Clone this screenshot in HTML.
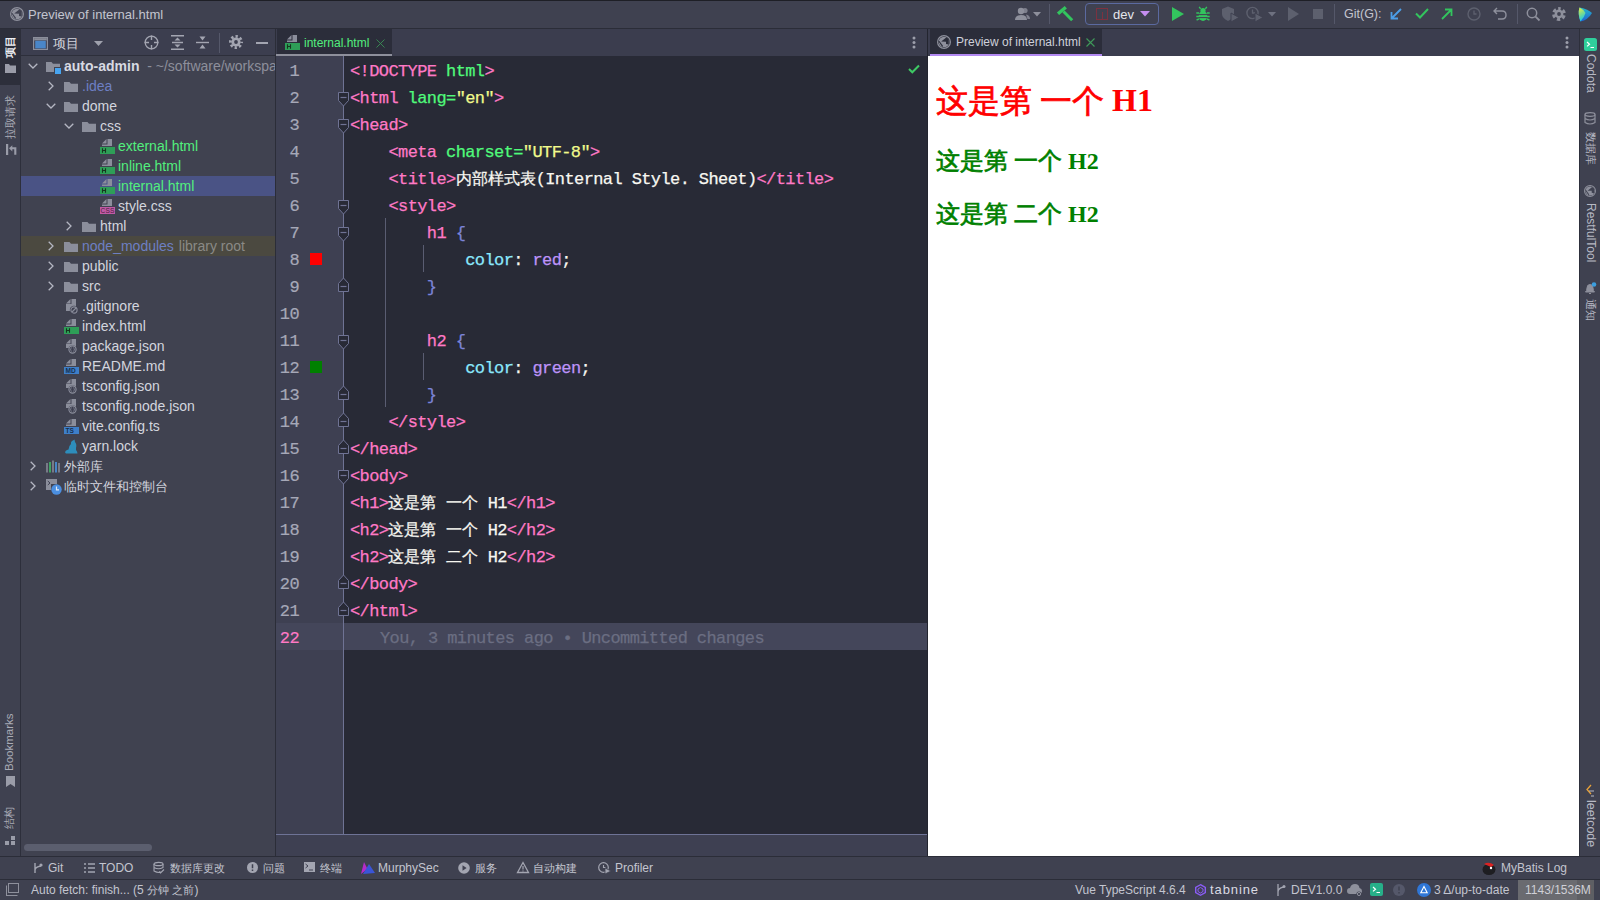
<!DOCTYPE html>
<html><head><meta charset="utf-8">
<style>
*{margin:0;padding:0;box-sizing:border-box}
html,body{width:1600px;height:900px;overflow:hidden;background:#3f4150;font-family:"Liberation Sans",sans-serif;}
.abs{position:absolute}
svg{position:absolute;overflow:visible}
#title{left:0;top:0;width:1600px;height:28px;background:#3f4150}
#title .t{left:28px;top:7px;font-size:13px;color:#c3c5cf;white-space:nowrap}
#lstrip{left:0;top:28px;width:21px;height:828px;background:#3f4150;border-right:1px solid #2d2f3b}
.vt{position:absolute;transform-origin:0 0;transform:rotate(90deg);font-size:12px;color:#a9abb6;white-space:nowrap;line-height:12px}
#proj{left:21px;top:28px;width:254px;height:828px;background:#404250;overflow:hidden}
#projhdr{left:0;top:0;width:254px;height:28px;background:#3c3e4f;border-bottom:1px solid #2d2f3b;border-top:1px solid #34364a}
.row{position:absolute;left:0;width:254px;height:20px;font-size:14px;line-height:20px;color:#d3d5de;white-space:nowrap}
.row .tx{position:absolute;top:0}
.gr{color:#52ef7d}.k{font-size:16px;letter-spacing:0}.hh{font-family:"Liberation Serif",serif;font-weight:bold;white-space:nowrap}.hz{font-weight:normal;-webkit-text-stroke:0.7px currentColor}
#vsep{left:275px;top:28px;width:1px;height:828px;background:#2b2d38}
#ed{left:276px;top:28px;width:651px;height:828px;background:#282a36;overflow:hidden}
#edtabs{left:0;top:0;width:651px;height:28px;background:#3b3d4e}
#gutter{left:0;top:28px;width:67px;height:778px;background:#3e4052}
#code{left:67px;top:28px;width:584px;height:778px;background:#282a36}
#edbot{left:0;top:806px;width:651px;height:22px;background:#3e4052;border-top:1px solid #6e7396}
.ln{position:absolute;left:0;width:23px;margin-top:1.5px;-webkit-text-stroke:0.2px currentColor;text-align:right;font-family:"Liberation Mono",monospace;font-size:17px;letter-spacing:-0.6px;color:#a6a8b8;height:27px;line-height:27px}
.cl{position:absolute;left:74px;margin-top:1.5px;-webkit-text-stroke:0.25px currentColor;font-family:"Liberation Mono",monospace;font-size:17px;letter-spacing:-0.6px;height:27px;line-height:27px;color:#f8f8f2;white-space:pre}
.p{color:#ff79c6}.g{color:#50fa7b}.y{color:#f1fa8c}.c{color:#8be9fd}.v{color:#bd93f9}.b{color:#7c84d8}.w{color:#f8f8f2}
#psep{left:927px;top:28px;width:1px;height:828px;background:#23252f}
#prev{left:928px;top:28px;width:651px;height:828px;background:#fff;overflow:hidden}
#prevtabs{left:0;top:0;width:651px;height:28px;background:#3b3d4e}
#rstrip{left:1579px;top:28px;width:21px;height:828px;background:#3f4150;border-left:1px solid #2d2f3b}
#tools{left:0;top:856px;width:1600px;height:24px;background:#3f4150;border-top:1px solid #2b2d38;border-bottom:1px solid #2b2d38}
#status{left:0;top:880px;width:1600px;height:20px;background:#3f4150}
.tt{position:absolute;top:4px;font-size:12px;color:#c3c5cf;white-space:nowrap}
</style></head>
<body>
<svg width="0" height="0" style="position:absolute">
<defs>
<symbol id="folder" viewBox="0 0 14 12"><path d="M0 0H5.5L7 2H14V12H0Z" fill="#8b8e9b"/></symbol>
<symbol id="chevR" viewBox="0 0 8 10"><path d="M2 1L6 5L2 9" fill="none" stroke="#b8bac4" stroke-width="1.3"/></symbol>
<symbol id="chevD" viewBox="0 0 10 8"><path d="M1 2L5 6L9 2" fill="none" stroke="#b8bac4" stroke-width="1.3"/></symbol>
<symbol id="doc" viewBox="0 0 15 15"><path d="M2 0H12V7H2Z" fill="#8b8e9b"/><path d="M2 0H7V1L3 5H2Z" fill="#3f4152"/><path d="M2.5 4.2L6.2 0.5" stroke="#3f4152" stroke-width="1.4"/></symbol>
</defs>
</svg>
<div id="title" class="abs"><div class="abs t">Preview of internal.html</div></div>
<div id="lstrip" class="abs">
<div class="abs" style="left:0;top:0;width:20px;height:57px;background:#2d2f3b"></div>
<div class="vt" style="left:4px;top:30px;color:#eceef2;font-size:11px;font-weight:bold;transform:rotate(-90deg)">项目</div>
<svg style="left:5px;top:36px" width="11" height="9" viewBox="0 0 11 9"><path d="M0 0H4L5 1.5H11V9H0Z" fill="#9a9ca8"/></svg>
<div class="vt" style="left:4px;top:111px;font-size:11px;transform:rotate(-90deg)">拉取请求</div>
<svg style="left:5px;top:115px" width="12" height="13" viewBox="0 0 12 13"><rect x="1" y="1" width="2.2" height="11" fill="#9a9ca8"/><path d="M4 5.3L7.3 2.2V8.4Z" fill="#9a9ca8"/><path d="M7 5.3H10.3V11.8" fill="none" stroke="#9a9ca8" stroke-width="2.1"/></svg>
<div class="vt" style="left:3px;top:743px;font-size:11.5px;transform:rotate(-90deg)">Bookmarks</div>
<svg style="left:6px;top:748px" width="9" height="11" viewBox="0 0 9 11"><path d="M0 0H9V11L4.5 8L0 11Z" fill="#9a9ca8"/></svg>
<div class="vt" style="left:3px;top:801px;font-size:11px;transform:rotate(-90deg)">结构</div>
<svg style="left:5px;top:808px" width="10" height="10" viewBox="0 0 10 10"><path d="M0 5H4V9H0ZM6 5H10V9H6ZM6 0H10V4H6Z" fill="#9a9ca8"/></svg>
</div>
<div id="proj" class="abs">
<div id="projhdr" class="abs">
<svg style="left:12px;top:8px" width="15" height="13" viewBox="0 0 15 13"><rect x="0.6" y="0.6" width="13.8" height="11.8" fill="none" stroke="#8b8e9b" stroke-width="1.2"/><rect x="1.2" y="1.2" width="12.6" height="2.2" fill="#8b8e9b"/><rect x="2.2" y="3.8" width="10.6" height="7.6" fill="#4a86c8"/></svg>
<div class="abs" style="left:32px;top:6px;font-size:13px;color:#d3d5de">项目</div>
<svg style="left:73px;top:12px" width="9" height="6" viewBox="0 0 9 6"><path d="M0 0H9L4.5 5Z" fill="#9fa1ad"/></svg>
<svg style="left:123px;top:6px" width="15" height="15" viewBox="0 0 15 15"><circle cx="7.5" cy="7.5" r="6.3" fill="none" stroke="#a3a5b1" stroke-width="1.3"/><path d="M7.5 0.5V5M7.5 10V14.5M0.5 7.5H5M10 7.5H14.5" stroke="#a3a5b1" stroke-width="1.4"/></svg>
<svg style="left:150px;top:6px" width="13" height="15" viewBox="0 0 13 15"><path d="M0 0.8H13M0 14.2H13M1 7.5H12" stroke="#a3a5b1" stroke-width="1.4"/><path d="M6.5 2.5L3.5 5.5H9.5ZM6.5 12.5L3.5 9.5H9.5Z" fill="#a3a5b1"/></svg>
<svg style="left:175px;top:6px" width="13" height="15" viewBox="0 0 13 15"><path d="M0 7.5H13" stroke="#a3a5b1" stroke-width="1.4"/><path d="M6.5 5.5L3.5 1.5H9.5ZM6.5 9.5L3.5 13.5H9.5Z" fill="#a3a5b1"/></svg>
<div class="abs" style="left:198px;top:4px;width:1px;height:20px;background:#55586a"></div>
<svg style="left:208px;top:6px" width="14" height="14" viewBox="0 0 14 14"><circle cx="7" cy="7" r="5.6" fill="none" stroke="#a3a5b1" stroke-width="2.8" stroke-dasharray="2.3 2.098" stroke-dashoffset="1.15"/><circle cx="7" cy="7" r="4.6" fill="#a3a5b1"/><circle cx="7" cy="7" r="1.9" fill="#3c3e4f"/></svg>
<div class="abs" style="left:235px;top:13px;width:12px;height:1.6px;background:#a3a5b1"></div>
</div>
<div class="row" style="top:28px;"><svg style="left:7px;top:7px" width="10" height="6" viewBox="0 0 10 6"><path d="M0.7 0.7L5 5L9.3 0.7" fill="none" stroke="#b4b6c2" stroke-width="1.3"/></svg><svg style="left:25px;top:5.5px" width="14" height="10" viewBox="0 0 14 10"><path d="M0 0H5.5L7 1.8H14V10H0Z" fill="#8b8e9b"/></svg><svg style="left:33px;top:11px" width="7" height="7" viewBox="0 0 7 7"><rect x="0" y="0" width="7" height="7" fill="#404250"/><rect x="1" y="1" width="6" height="6" fill="#47a4f0"/></svg><div class="tx" style="left:43px"><b style="color:#d8dae2">auto-admin</b><span style="color:#8d8f9b">&nbsp;&nbsp;- ~/software/workspace/auto-admin</span></div></div>
<div class="row" style="top:48px;"><svg style="left:27px;top:5px" width="6" height="10" viewBox="0 0 6 10"><path d="M0.7 0.7L5 5L0.7 9.3" fill="none" stroke="#b4b6c2" stroke-width="1.3"/></svg><svg style="left:43px;top:5.5px" width="14" height="10" viewBox="0 0 14 10"><path d="M0 0H5.5L7 1.8H14V10H0Z" fill="#8b8e9b"/></svg><div class="tx" style="left:61px"><span style="color:#6d7fc3">.idea</span></div></div>
<div class="row" style="top:68px;"><svg style="left:25px;top:7px" width="10" height="6" viewBox="0 0 10 6"><path d="M0.7 0.7L5 5L9.3 0.7" fill="none" stroke="#b4b6c2" stroke-width="1.3"/></svg><svg style="left:43px;top:5.5px" width="14" height="10" viewBox="0 0 14 10"><path d="M0 0H5.5L7 1.8H14V10H0Z" fill="#8b8e9b"/></svg><div class="tx" style="left:61px">dome</div></div>
<div class="row" style="top:88px;"><svg style="left:43px;top:7px" width="10" height="6" viewBox="0 0 10 6"><path d="M0.7 0.7L5 5L9.3 0.7" fill="none" stroke="#b4b6c2" stroke-width="1.3"/></svg><svg style="left:61px;top:5.5px" width="14" height="10" viewBox="0 0 14 10"><path d="M0 0H5.5L7 1.8H14V10H0Z" fill="#8b8e9b"/></svg><div class="tx" style="left:79px">css</div></div>
<div class="row" style="top:108px;"><svg style="left:79px;top:3px" width="15" height="15" viewBox="0 0 15 15"><path d="M7.5 0H12V7H2V5.5H7.5Z" fill="#8b8e9b"/><path d="M2 4.5L6.5 0V4.5Z" fill="#8b8e9b"/><rect x="0" y="8" width="15" height="7" fill="#2e9e57"/><path d="M2.5 9.2V13.8M5.5 9.2V13.8M2.5 11.5H5.5" stroke="#17351f" stroke-width="1.1"/></svg><div class="tx" style="left:97px"><span class="gr">external.html</span></div></div>
<div class="row" style="top:128px;"><svg style="left:79px;top:3px" width="15" height="15" viewBox="0 0 15 15"><path d="M7.5 0H12V7H2V5.5H7.5Z" fill="#8b8e9b"/><path d="M2 4.5L6.5 0V4.5Z" fill="#8b8e9b"/><rect x="0" y="8" width="15" height="7" fill="#2e9e57"/><path d="M2.5 9.2V13.8M5.5 9.2V13.8M2.5 11.5H5.5" stroke="#17351f" stroke-width="1.1"/></svg><div class="tx" style="left:97px"><span class="gr">inline.html</span></div></div>
<div class="row" style="top:148px;background:#4a5385"><svg style="left:79px;top:3px" width="15" height="15" viewBox="0 0 15 15"><path d="M7.5 0H12V7H2V5.5H7.5Z" fill="#8b8e9b"/><path d="M2 4.5L6.5 0V4.5Z" fill="#8b8e9b"/><rect x="0" y="8" width="15" height="7" fill="#2e9e57"/><path d="M2.5 9.2V13.8M5.5 9.2V13.8M2.5 11.5H5.5" stroke="#17351f" stroke-width="1.1"/></svg><div class="tx" style="left:97px"><span class="gr">internal.html</span></div></div>
<div class="row" style="top:168px;"><svg style="left:79px;top:3px" width="15" height="15" viewBox="0 0 15 15"><path d="M7.5 0H12V7H2V5.5H7.5Z" fill="#8b8e9b"/><path d="M2 4.5L6.5 0V4.5Z" fill="#8b8e9b"/><rect x="0" y="8" width="15" height="7" fill="#c15aa6"/><text x="0.6" y="14.2" font-family="Liberation Sans" font-size="6.6" fill="#4a1f3e" textLength="13.8">CSS</text></svg><div class="tx" style="left:97px">style.css</div></div>
<div class="row" style="top:188px;"><svg style="left:45px;top:5px" width="6" height="10" viewBox="0 0 6 10"><path d="M0.7 0.7L5 5L0.7 9.3" fill="none" stroke="#b4b6c2" stroke-width="1.3"/></svg><svg style="left:61px;top:5.5px" width="14" height="10" viewBox="0 0 14 10"><path d="M0 0H5.5L7 1.8H14V10H0Z" fill="#8b8e9b"/></svg><div class="tx" style="left:79px">html</div></div>
<div class="row" style="top:208px;background:#4b4940"><svg style="left:27px;top:5px" width="6" height="10" viewBox="0 0 6 10"><path d="M0.7 0.7L5 5L0.7 9.3" fill="none" stroke="#b4b6c2" stroke-width="1.3"/></svg><svg style="left:43px;top:5.5px" width="14" height="10" viewBox="0 0 14 10"><path d="M0 0H5.5L7 1.8H14V10H0Z" fill="#8b8e9b"/></svg><div class="tx" style="left:61px"><span style="color:#6d7fc3">node_modules</span><span style="color:#8a8a86;margin-left:5px">library root</span></div></div>
<div class="row" style="top:228px;"><svg style="left:27px;top:5px" width="6" height="10" viewBox="0 0 6 10"><path d="M0.7 0.7L5 5L0.7 9.3" fill="none" stroke="#b4b6c2" stroke-width="1.3"/></svg><svg style="left:43px;top:5.5px" width="14" height="10" viewBox="0 0 14 10"><path d="M0 0H5.5L7 1.8H14V10H0Z" fill="#8b8e9b"/></svg><div class="tx" style="left:61px">public</div></div>
<div class="row" style="top:248px;"><svg style="left:27px;top:5px" width="6" height="10" viewBox="0 0 6 10"><path d="M0.7 0.7L5 5L0.7 9.3" fill="none" stroke="#b4b6c2" stroke-width="1.3"/></svg><svg style="left:43px;top:5.5px" width="14" height="10" viewBox="0 0 14 10"><path d="M0 0H5.5L7 1.8H14V10H0Z" fill="#8b8e9b"/></svg><div class="tx" style="left:61px">src</div></div>
<div class="row" style="top:268px;"><svg style="left:43px;top:3px" width="15" height="15" viewBox="0 0 15 15"><path d="M7.5 0H12V7H2V5.5H7.5Z" fill="#8b8e9b"/><path d="M2 4.5L6.5 0V4.5Z" fill="#8b8e9b"/><path d="M2 5H12V12H2Z" fill="#8b8e9b"/><circle cx="10" cy="11" r="4.2" fill="#3f4152"/><circle cx="10" cy="11" r="3.1" fill="none" stroke="#8b8e9b" stroke-width="1.1"/><path d="M8 13L12 9" stroke="#8b8e9b" stroke-width="1.1"/></svg><div class="tx" style="left:61px">.gitignore</div></div>
<div class="row" style="top:288px;"><svg style="left:43px;top:3px" width="15" height="15" viewBox="0 0 15 15"><path d="M7.5 0H12V7H2V5.5H7.5Z" fill="#8b8e9b"/><path d="M2 4.5L6.5 0V4.5Z" fill="#8b8e9b"/><rect x="0" y="8" width="15" height="7" fill="#2e9e57"/><path d="M2.5 9.2V13.8M5.5 9.2V13.8M2.5 11.5H5.5" stroke="#17351f" stroke-width="1.1"/></svg><div class="tx" style="left:61px">index.html</div></div>
<div class="row" style="top:308px;"><svg style="left:43px;top:3px" width="15" height="15" viewBox="0 0 15 15"><path d="M7.5 0H12V7H2V5.5H7.5Z" fill="#8b8e9b"/><path d="M2 4.5L6.5 0V4.5Z" fill="#8b8e9b"/><path d="M2 5H12V9H2Z" fill="#8b8e9b"/><circle cx="8.5" cy="10.5" r="4.3" fill="#3f4152"/><circle cx="8.5" cy="10.5" r="3.6" fill="none" stroke="#8b8e9b" stroke-width="1.1"/><path d="M7.6 8.6Q6.7 8.6 6.9 9.6Q7 10.5 6.3 10.5Q7 10.5 6.9 11.4Q6.7 12.4 7.6 12.4M9.4 8.6Q10.3 8.6 10.1 9.6Q10 10.5 10.7 10.5Q10 10.5 10.1 11.4Q10.3 12.4 9.4 12.4" fill="none" stroke="#8b8e9b" stroke-width="0.7"/></svg><div class="tx" style="left:61px">package.json</div></div>
<div class="row" style="top:328px;"><svg style="left:43px;top:3px" width="15" height="15" viewBox="0 0 15 15"><path d="M7.5 0H12V7H2V5.5H7.5Z" fill="#8b8e9b"/><path d="M2 4.5L6.5 0V4.5Z" fill="#8b8e9b"/><rect x="0" y="8" width="15" height="7" fill="#3e7fc9"/><text x="1.5" y="14" font-family="Liberation Sans" font-size="6.5" font-weight="bold" fill="#17304f">MD</text></svg><div class="tx" style="left:61px">README.md</div></div>
<div class="row" style="top:348px;"><svg style="left:43px;top:3px" width="15" height="15" viewBox="0 0 15 15"><path d="M7.5 0H12V7H2V5.5H7.5Z" fill="#8b8e9b"/><path d="M2 4.5L6.5 0V4.5Z" fill="#8b8e9b"/><path d="M2 5H12V9H2Z" fill="#8b8e9b"/><circle cx="8.5" cy="10.5" r="4.3" fill="#3f4152"/><circle cx="8.5" cy="10.5" r="3.6" fill="none" stroke="#8b8e9b" stroke-width="1.1"/><path d="M7.6 8.6Q6.7 8.6 6.9 9.6Q7 10.5 6.3 10.5Q7 10.5 6.9 11.4Q6.7 12.4 7.6 12.4M9.4 8.6Q10.3 8.6 10.1 9.6Q10 10.5 10.7 10.5Q10 10.5 10.1 11.4Q10.3 12.4 9.4 12.4" fill="none" stroke="#8b8e9b" stroke-width="0.7"/></svg><div class="tx" style="left:61px">tsconfig.json</div></div>
<div class="row" style="top:368px;"><svg style="left:43px;top:3px" width="15" height="15" viewBox="0 0 15 15"><path d="M7.5 0H12V7H2V5.5H7.5Z" fill="#8b8e9b"/><path d="M2 4.5L6.5 0V4.5Z" fill="#8b8e9b"/><path d="M2 5H12V9H2Z" fill="#8b8e9b"/><circle cx="8.5" cy="10.5" r="4.3" fill="#3f4152"/><circle cx="8.5" cy="10.5" r="3.6" fill="none" stroke="#8b8e9b" stroke-width="1.1"/><path d="M7.6 8.6Q6.7 8.6 6.9 9.6Q7 10.5 6.3 10.5Q7 10.5 6.9 11.4Q6.7 12.4 7.6 12.4M9.4 8.6Q10.3 8.6 10.1 9.6Q10 10.5 10.7 10.5Q10 10.5 10.1 11.4Q10.3 12.4 9.4 12.4" fill="none" stroke="#8b8e9b" stroke-width="0.7"/></svg><div class="tx" style="left:61px">tsconfig.node.json</div></div>
<div class="row" style="top:388px;"><svg style="left:43px;top:3px" width="15" height="15" viewBox="0 0 15 15"><path d="M7.5 0H12V7H2V5.5H7.5Z" fill="#8b8e9b"/><path d="M2 4.5L6.5 0V4.5Z" fill="#8b8e9b"/><rect x="0" y="8" width="15" height="7" fill="#3e7fc9"/><text x="1.5" y="14" font-family="Liberation Sans" font-size="6.5" font-weight="bold" fill="#17304f">TS</text></svg><div class="tx" style="left:61px">vite.config.ts</div></div>
<div class="row" style="top:408px;"><svg style="left:43px;top:3px" width="15" height="15" viewBox="0 0 15 15"><path d="M9 1.5L10.5 0.5L11 3Q13 5 12 9Q11.5 11 13 12.5L13.5 14.5H2Q0.5 14 1.5 12Q3 10.5 4.5 10.5Q4.5 7 7 5Q6.5 2.5 9 1.5Z" fill="#2d8dbb"/></svg><div class="tx" style="left:61px">yarn.lock</div></div>
<div class="row" style="top:428px;"><svg style="left:9px;top:5px" width="6" height="10" viewBox="0 0 6 10"><path d="M0.7 0.7L5 5L0.7 9.3" fill="none" stroke="#b4b6c2" stroke-width="1.3"/></svg><svg style="left:25px;top:4px" width="15" height="13" viewBox="0 0 15 13"><path d="M1 3V12.5M7 0.5V12.5M13 3V12.5" stroke="#8b8e9b" stroke-width="1.5"/><path d="M4 2V12.5" stroke="#3fc46a" stroke-width="1.5"/><path d="M10 2V12.5" stroke="#4a9ef0" stroke-width="1.5"/></svg><div class="tx" style="left:43px"><span style="font-size:13px">外部库</span></div></div>
<div class="row" style="top:448px;"><svg style="left:9px;top:5px" width="6" height="10" viewBox="0 0 6 10"><path d="M0.7 0.7L5 5L0.7 9.3" fill="none" stroke="#b4b6c2" stroke-width="1.3"/></svg><svg style="left:25px;top:3px" width="16" height="16" viewBox="0 0 16 16"><path d="M0 0H11V5H5V11H0Z" fill="#8b8e9b"/><path d="M1.8 2L4 4L1.8 6" fill="none" stroke="#3f4152" stroke-width="1"/><circle cx="10.5" cy="10.5" r="5.2" fill="#4b8fe0"/><path d="M10.5 7.5V10.8H13" fill="none" stroke="#dfe9f7" stroke-width="1.2"/></svg><div class="tx" style="left:43px"><span style="font-size:13px">临时文件和控制台</span></div></div>
<div class="abs" style="left:3px;top:816px;width:128px;height:7px;border-radius:4px;background:#5b5e6e"></div>
</div>
<div id="vsep" class="abs"></div>
<div id="ed" class="abs">
<div id="edtabs" class="abs">
 <div class="abs" style="left:1px;top:1px;width:115px;height:25px;background:#2b2d3a"></div>
 <div class="abs" style="left:0;top:26px;width:116px;height:2px;background:#8e909c"></div>
 <svg style="left:9px;top:7px" width="15" height="15" viewBox="0 0 15 15"><path d="M7.5 0H12V7H2V5.5H7.5Z" fill="#8b8e9b"/><path d="M2 4.5L6.5 0V4.5Z" fill="#8b8e9b"/><rect x="0" y="8" width="15" height="7" fill="#2e9e57"/><path d="M2.5 9.2V13.8M5.5 9.2V13.8M2.5 11.5H5.5" stroke="#17351f" stroke-width="1.1"/></svg>
 <div class="abs" style="left:28px;top:8px;font-size:12px;color:#52ef7d;white-space:nowrap">internal.html</div>
 <svg style="left:100px;top:11px" width="9" height="9" viewBox="0 0 9 9"><path d="M0.5 0.5L8.5 8.5M8.5 0.5L0.5 8.5" stroke="#3a8f55" stroke-width="0.9"/></svg>
</div>
<div id="gutter" class="abs"></div>
<div id="code" class="abs"></div>
<div class="abs" style="left:0;top:595px;width:651px;height:27px;background:#44465a"></div>
<div class="abs" style="left:67px;top:28px;width:1px;height:778px;background:#6f7394"></div>
<div class="abs" style="left:109px;top:190px;width:1px;height:189px;background:#5a5d72"></div>
<div class="abs" style="left:147px;top:217px;width:1px;height:27px;background:#5a5d72"></div>
<div class="abs" style="left:147px;top:325px;width:1px;height:27px;background:#5a5d72"></div>
<div id="edbot" class="abs"></div>
<div class="ln" style="top:28px;color:#a6a8b8">1</div>
<div class="ln" style="top:55px;color:#a6a8b8">2</div>
<div class="ln" style="top:82px;color:#a6a8b8">3</div>
<div class="ln" style="top:109px;color:#a6a8b8">4</div>
<div class="ln" style="top:136px;color:#a6a8b8">5</div>
<div class="ln" style="top:163px;color:#a6a8b8">6</div>
<div class="ln" style="top:190px;color:#a6a8b8">7</div>
<div class="ln" style="top:217px;color:#a6a8b8">8</div>
<div class="ln" style="top:244px;color:#a6a8b8">9</div>
<div class="ln" style="top:271px;color:#a6a8b8">10</div>
<div class="ln" style="top:298px;color:#a6a8b8">11</div>
<div class="ln" style="top:325px;color:#a6a8b8">12</div>
<div class="ln" style="top:352px;color:#a6a8b8">13</div>
<div class="ln" style="top:379px;color:#a6a8b8">14</div>
<div class="ln" style="top:406px;color:#a6a8b8">15</div>
<div class="ln" style="top:433px;color:#a6a8b8">16</div>
<div class="ln" style="top:460px;color:#a6a8b8">17</div>
<div class="ln" style="top:487px;color:#a6a8b8">18</div>
<div class="ln" style="top:514px;color:#a6a8b8">19</div>
<div class="ln" style="top:541px;color:#a6a8b8">20</div>
<div class="ln" style="top:568px;color:#a6a8b8">21</div>
<div class="ln" style="top:595px;color:#ff79c6">22</div>
<div class="cl" style="top:28px"><span class="p">&lt;!DOCTYPE</span><span class="g"> html</span><span class="p">&gt;</span></div>
<div class="cl" style="top:55px"><span class="p">&lt;html</span><span class="g"> lang=</span><span class="y">"en"</span><span class="p">&gt;</span></div>
<div class="cl" style="top:82px"><span class="p">&lt;head&gt;</span></div>
<div class="cl" style="top:109px">    <span class="p">&lt;meta</span><span class="g"> charset=</span><span class="y">"UTF-8"</span><span class="p">&gt;</span></div>
<div class="cl" style="top:136px">    <span class="p">&lt;title&gt;</span><span class="k">内部样式表</span>(Internal Style. Sheet)<span class="p">&lt;/title&gt;</span></div>
<div class="cl" style="top:163px">    <span class="p">&lt;style&gt;</span></div>
<div class="cl" style="top:190px">        <span class="p">h1</span> <span class="b">{</span></div>
<div class="cl" style="top:217px">            <span class="c">color</span>: <span class="v">red</span>;</div>
<div class="cl" style="top:244px">        <span class="b">}</span></div>
<div class="cl" style="top:271px"></div>
<div class="cl" style="top:298px">        <span class="p">h2</span> <span class="b">{</span></div>
<div class="cl" style="top:325px">            <span class="c">color</span>: <span class="v">green</span>;</div>
<div class="cl" style="top:352px">        <span class="b">}</span></div>
<div class="cl" style="top:379px">    <span class="p">&lt;/style&gt;</span></div>
<div class="cl" style="top:406px"><span class="p">&lt;/head&gt;</span></div>
<div class="cl" style="top:433px"><span class="p">&lt;body&gt;</span></div>
<div class="cl" style="top:460px"><span class="p">&lt;h1&gt;</span><span class="k">这是第</span> <span class="k">一个</span> H1<span class="p">&lt;/h1&gt;</span></div>
<div class="cl" style="top:487px"><span class="p">&lt;h2&gt;</span><span class="k">这是第</span> <span class="k">一个</span> H2<span class="p">&lt;/h2&gt;</span></div>
<div class="cl" style="top:514px"><span class="p">&lt;h2&gt;</span><span class="k">这是第</span> <span class="k">二个</span> H2<span class="p">&lt;/h2&gt;</span></div>
<div class="cl" style="top:541px"><span class="p">&lt;/body&gt;</span></div>
<div class="cl" style="top:568px"><span class="p">&lt;/html&gt;</span></div>
<div class="cl" style="top:595px;left:104px;color:#6b6e82">You, 3 minutes ago • Uncommitted changes</div>
<svg style="left:61px;top:63.5px" width="13" height="16" viewBox="0 0 13 16"><path d="M1.5 0.5H11.5V8.5L6.5 14L1.5 8.5Z" fill="#282a36" stroke="#6f7394" stroke-width="1"/><path d="M3.5 5.5H9.5" stroke="#6f7394" stroke-width="1.2"/></svg><svg style="left:61px;top:90.5px" width="13" height="16" viewBox="0 0 13 16"><path d="M1.5 0.5H11.5V8.5L6.5 14L1.5 8.5Z" fill="#282a36" stroke="#6f7394" stroke-width="1"/><path d="M3.5 5.5H9.5" stroke="#6f7394" stroke-width="1.2"/></svg><svg style="left:61px;top:171.5px" width="13" height="16" viewBox="0 0 13 16"><path d="M1.5 0.5H11.5V8.5L6.5 14L1.5 8.5Z" fill="#282a36" stroke="#6f7394" stroke-width="1"/><path d="M3.5 5.5H9.5" stroke="#6f7394" stroke-width="1.2"/></svg><svg style="left:61px;top:198.5px" width="13" height="16" viewBox="0 0 13 16"><path d="M1.5 0.5H11.5V8.5L6.5 14L1.5 8.5Z" fill="#282a36" stroke="#6f7394" stroke-width="1"/><path d="M3.5 5.5H9.5" stroke="#6f7394" stroke-width="1.2"/></svg><svg style="left:61px;top:306.5px" width="13" height="16" viewBox="0 0 13 16"><path d="M1.5 0.5H11.5V8.5L6.5 14L1.5 8.5Z" fill="#282a36" stroke="#6f7394" stroke-width="1"/><path d="M3.5 5.5H9.5" stroke="#6f7394" stroke-width="1.2"/></svg><svg style="left:61px;top:441.5px" width="13" height="16" viewBox="0 0 13 16"><path d="M1.5 0.5H11.5V8.5L6.5 14L1.5 8.5Z" fill="#282a36" stroke="#6f7394" stroke-width="1"/><path d="M3.5 5.5H9.5" stroke="#6f7394" stroke-width="1.2"/></svg><svg style="left:61px;top:247.5px" width="13" height="16" viewBox="0 0 13 16"><path d="M1.5 15.5H11.5V7.5L6.5 2L1.5 7.5Z" fill="#282a36" stroke="#6f7394" stroke-width="1"/><path d="M3.5 10.5H9.5" stroke="#6f7394" stroke-width="1.2"/></svg><svg style="left:61px;top:355.5px" width="13" height="16" viewBox="0 0 13 16"><path d="M1.5 15.5H11.5V7.5L6.5 2L1.5 7.5Z" fill="#282a36" stroke="#6f7394" stroke-width="1"/><path d="M3.5 10.5H9.5" stroke="#6f7394" stroke-width="1.2"/></svg><svg style="left:61px;top:382.5px" width="13" height="16" viewBox="0 0 13 16"><path d="M1.5 15.5H11.5V7.5L6.5 2L1.5 7.5Z" fill="#282a36" stroke="#6f7394" stroke-width="1"/><path d="M3.5 10.5H9.5" stroke="#6f7394" stroke-width="1.2"/></svg><svg style="left:61px;top:409.5px" width="13" height="16" viewBox="0 0 13 16"><path d="M1.5 15.5H11.5V7.5L6.5 2L1.5 7.5Z" fill="#282a36" stroke="#6f7394" stroke-width="1"/><path d="M3.5 10.5H9.5" stroke="#6f7394" stroke-width="1.2"/></svg><svg style="left:61px;top:544.5px" width="13" height="16" viewBox="0 0 13 16"><path d="M1.5 15.5H11.5V7.5L6.5 2L1.5 7.5Z" fill="#282a36" stroke="#6f7394" stroke-width="1"/><path d="M3.5 10.5H9.5" stroke="#6f7394" stroke-width="1.2"/></svg><svg style="left:61px;top:571.5px" width="13" height="16" viewBox="0 0 13 16"><path d="M1.5 15.5H11.5V7.5L6.5 2L1.5 7.5Z" fill="#282a36" stroke="#6f7394" stroke-width="1"/><path d="M3.5 10.5H9.5" stroke="#6f7394" stroke-width="1.2"/></svg><div class="abs" style="left:34px;top:225px;width:12px;height:12px;background:#ff0000"></div><div class="abs" style="left:34px;top:333px;width:12px;height:12px;background:#008000"></div><svg style="left:632px;top:36px" width="12" height="10" viewBox="0 0 12 10"><path d="M1 5L4.3 8.3L11 1.5" fill="none" stroke="#3ec964" stroke-width="2"/></svg>
<svg style="left:636px;top:8px" width="4" height="13" viewBox="0 0 4 13"><circle cx="2" cy="2" r="1.5" fill="#9d9fab"/><circle cx="2" cy="6.5" r="1.5" fill="#9d9fab"/><circle cx="2" cy="11" r="1.5" fill="#9d9fab"/></svg>
</div>
<div id="psep" class="abs"></div>
<div id="prev" class="abs">
<div id="prevtabs" class="abs"><div class="abs" style="left:2px;top:1px;width:172px;height:25px;background:#2b2d3a"></div><div class="abs" style="left:2px;top:26px;width:172px;height:2px;background:#b38af2"></div><svg style="left:9px;top:7px" width="14" height="14" viewBox="0 0 14 14"><circle cx="7" cy="7" r="6.4" fill="none" stroke="#8e909c" stroke-width="1.2"/><circle cx="7" cy="7" r="5.3" fill="#8e909c"/><path d="M4.2 6.6L9.5 2.2L11.8 4V9.6L9 9V6.8Z" fill="#2b2d3a"/><path d="M1.4 6.2L2.4 5.9L6.1 11.1L5.2 11.9Z" fill="#2b2d3a"/></svg><div class="abs" style="left:28px;top:7px;font-size:12px;color:#cfd1da;white-space:nowrap">Preview of internal.html</div><svg style="left:158px;top:10px" width="9" height="9" viewBox="0 0 9 9"><path d="M0.5 0.5L8.5 8.5M8.5 0.5L0.5 8.5" stroke="#3f9a5a" stroke-width="1.1"/></svg><svg style="left:637px;top:8px" width="4" height="13" viewBox="0 0 4 13"><circle cx="2" cy="2" r="1.5" fill="#9d9fab"/><circle cx="2" cy="6.5" r="1.5" fill="#9d9fab"/><circle cx="2" cy="11" r="1.5" fill="#9d9fab"/></svg></div>
<div class="abs hh" style="left:8px;top:51px;font-size:32px;color:#f00"><span class="hz" style="position:relative;top:1px">这是第</span> <span class="hz" style="position:relative;top:1px">一个</span> H1</div>
<div class="abs hh" style="left:8px;top:117px;font-size:24px;color:#008000"><span class="hz">这是第</span> <span class="hz">一个</span> H2</div>
<div class="abs hh" style="left:8px;top:170px;font-size:24px;color:#008000"><span class="hz">这是第</span> <span class="hz">二个</span> H2</div>
</div>
<div id="rstrip" class="abs">
<svg style="left:4px;top:10px" width="13" height="13" viewBox="0 0 13 13"><rect width="13" height="13" rx="2.5" fill="#2fcf9c"/><path d="M3 4L5.5 6.2L3 8.4M6.5 9.5H10" fill="none" stroke="#fff" stroke-width="1.2"/></svg>
<div class="vt" style="left:17px;top:26px;font-size:12px;color:#b7b9c4">Codota</div>
<svg style="left:4px;top:84px" width="12" height="13" viewBox="0 0 12 13"><g fill="none" stroke="#8e909c" stroke-width="1.2"><ellipse cx="6" cy="2.5" rx="5" ry="1.8"/><path d="M1 2.5V10.5Q6 13.5 11 10.5V2.5M1 6.5Q6 9.5 11 6.5"/></g></svg>
<div class="vt" style="left:17px;top:104px;font-size:11px;color:#b7b9c4">数据库</div>
<svg style="left:4px;top:157px" width="12" height="12" viewBox="0 0 14 14"><circle cx="7" cy="7" r="6.4" fill="none" stroke="#8e909c" stroke-width="1.2"/><circle cx="7" cy="7" r="5.3" fill="#8e909c"/><path d="M4.2 6.6L9.5 2.2L11.8 4V9.6L9 9V6.8Z" fill="#3f4150"/><path d="M1.4 6.2L2.4 5.9L6.1 11.1L5.2 11.9Z" fill="#3f4150"/></svg>
<div class="vt" style="left:17px;top:175px;font-size:12px;color:#b7b9c4">RestfulTool</div>
<svg style="left:4px;top:254px" width="13" height="13" viewBox="0 0 13 13"><path d="M1.5 10Q3 9 3 6Q3 2.5 6 2.5Q9 2.5 9 6Q9 9 10.5 10Z M5 11.5H7" fill="#8e909c" stroke="#8e909c" stroke-width="1"/><circle cx="10" cy="2.5" r="2.3" fill="#3b9ede"/></svg>
<div class="vt" style="left:17px;top:271px;font-size:11px;color:#b7b9c4">通知</div>
<svg style="left:5px;top:756px" width="11" height="13" viewBox="0 0 11 13"><path d="M6 1L2 5.5L6 10" fill="none" stroke="#e8a23a" stroke-width="1.3"/><path d="M4 7H9M6 12H9" stroke="#b7b9c4" stroke-width="1.2"/></svg>
<div class="vt" style="left:17px;top:772px;font-size:12.5px;color:#b7b9c4">leetcode</div>
</div>
<div class="abs" style="left:0;top:0;width:1600px;height:28px"><div class="abs" style="left:0;top:0;width:1600px;height:1px;background:#1e1f26"></div><svg style="left:10px;top:7px" width="14" height="14" viewBox="0 0 14 14"><circle cx="7" cy="7" r="6.4" fill="none" stroke="#8e909c" stroke-width="1.2"/><circle cx="7" cy="7" r="5.3" fill="#8e909c"/><path d="M4.2 6.6L9.5 2.2L11.8 4V9.6L9 9V6.8Z" fill="#3f4150"/><path d="M1.4 6.2L2.4 5.9L6.1 11.1L5.2 11.9Z" fill="#3f4150"/></svg><svg style="left:1015px;top:7px" width="16" height="14" viewBox="0 0 16 14"><circle cx="6" cy="4" r="3.2" fill="#8e909c"/><path d="M0 13Q0 8 6 8Q12 8 12 13Z" fill="#8e909c"/><circle cx="10" cy="3.5" r="2.6" fill="#8e909c" opacity="0.8"/><path d="M11 7.5Q15 8 15 12H12.5" fill="#8e909c" opacity="0.8"/></svg><svg style="left:1033px;top:12px" width="8" height="5" viewBox="0 0 8 5"><path d="M0 0H8L4 4.5Z" fill="#8e909c"/></svg><div class="abs" style="left:1049px;top:4px;width:1px;height:20px;background:#55586a"></div><svg style="left:1056px;top:5px" width="18" height="17" viewBox="0 0 18 17"><path d="M7.5 6.5L16.2 15.2" stroke="#33c45e" stroke-width="3"/><path d="M2 8.8L9.8 2.2" stroke="#33c45e" stroke-width="3.4"/></svg><div class="abs" style="left:1085px;top:3px;width:74px;height:22px;border:1px solid #5b6aa0;border-radius:4px;background:#3f4150"></div><div class="abs" style="left:1096px;top:8px;width:12px;height:12px;border:1px solid #7b3240"></div><div class="abs" style="left:1102px;top:12px;width:1px;height:8px;background:#7b3240"></div><div class="abs" style="left:1113px;top:7px;font-size:13px;color:#e5e6ec">dev</div><svg style="left:1140px;top:11px" width="10" height="6" viewBox="0 0 10 6"><path d="M0 0H10L5 5.5Z" fill="#c58ef0"/></svg><svg style="left:1172px;top:7px" width="12" height="14" viewBox="0 0 12 14"><path d="M0 0L12 7L0 14Z" fill="#33c45e"/></svg><svg style="left:1196px;top:6px" width="14" height="16" viewBox="0 0 14 16"><path d="M4.6 2.8L3.2 0.8M9.4 2.8L10.8 0.8M0.3 7H3M11 7H13.7M0.3 10.5H3M11 10.5H13.7M0.6 14L3.2 12.8M13.4 14L10.8 12.8" stroke="#33c45e" stroke-width="1.4"/><circle cx="7" cy="4.6" r="2.6" fill="#33c45e"/><ellipse cx="7" cy="10" rx="4.3" ry="5" fill="#33c45e"/><path d="M2.8 8.6H11.2M2.8 11.6H11.2" stroke="#3f4150" stroke-width="1"/></svg><svg style="left:1222px;top:6px" width="17" height="16" viewBox="0 0 17 16"><path d="M0 3L6 0.5L12 3V8Q12 12 6 15Q0 12 0 8Z" fill="#5d606e"/><path d="M9 7L17 11.5L9 16Z" fill="#5d606e" stroke="#3f4150" stroke-width="1"/></svg><svg style="left:1246px;top:6px" width="17" height="16" viewBox="0 0 17 16"><circle cx="6.5" cy="7" r="5.6" fill="none" stroke="#5d606e" stroke-width="1.4"/><path d="M6.5 3.5V7H9" fill="none" stroke="#5d606e" stroke-width="1.3"/><path d="M9 7L17 11.5L9 16Z" fill="#5d606e" stroke="#3f4150" stroke-width="1"/></svg><svg style="left:1268px;top:12px" width="8" height="5" viewBox="0 0 8 5"><path d="M0 0H8L4 4.5Z" fill="#6e7180"/></svg><svg style="left:1288px;top:7px" width="11" height="14" viewBox="0 0 11 14"><path d="M0 0L11 7L0 14Z" fill="#5d606e"/></svg><div class="abs" style="left:1313px;top:9px;width:10px;height:10px;background:#5d606e"></div><div class="abs" style="left:1334px;top:4px;width:1px;height:20px;background:#55586a"></div><div class="abs" style="left:1344px;top:7px;font-size:12.5px;color:#c3c5cf;white-space:nowrap">Git(G):</div><svg style="left:1390px;top:8px" width="12" height="12" viewBox="0 0 12 12"><path d="M11 1L2 10M1.5 4V10.5H8" fill="none" stroke="#4c9ee8" stroke-width="1.8"/></svg><svg style="left:1415px;top:8px" width="14" height="11" viewBox="0 0 14 11"><path d="M1 5.5L5 9.5L13 1" fill="none" stroke="#33c45e" stroke-width="2"/></svg><svg style="left:1441px;top:8px" width="12" height="12" viewBox="0 0 12 12"><path d="M1 11L10 2M4 1.5H10.5V8" fill="none" stroke="#33c45e" stroke-width="1.8"/></svg><svg style="left:1467px;top:7px" width="14" height="14" viewBox="0 0 14 14"><circle cx="7" cy="7" r="6" fill="none" stroke="#5d606e" stroke-width="1.4"/><path d="M7 3.5V7H9.5" fill="none" stroke="#5d606e" stroke-width="1.3"/></svg><svg style="left:1493px;top:7px" width="14" height="14" viewBox="0 0 14 14"><path d="M4 1L1 4L4 7M1 4H9Q13 4 13 8Q13 12 9 12H5" fill="none" stroke="#8e909c" stroke-width="1.4"/></svg><div class="abs" style="left:1517px;top:4px;width:1px;height:20px;background:#55586a"></div><svg style="left:1526px;top:7px" width="15" height="15" viewBox="0 0 15 15"><circle cx="6" cy="6" r="4.7" fill="none" stroke="#8e909c" stroke-width="1.5"/><path d="M9.3 9.3L13.5 13.5" stroke="#8e909c" stroke-width="1.8"/></svg><svg style="left:1552px;top:7px" width="14" height="14" viewBox="0 0 14 14"><circle cx="7" cy="7" r="5.4" fill="none" stroke="#8e909c" stroke-width="3" stroke-dasharray="3.3 2.355" stroke-dashoffset="1.65" transform="rotate(-90 7 7)"/><circle cx="7" cy="7" r="4.4" fill="#8e909c"/><circle cx="7" cy="7" r="1.9" fill="#3f4150"/></svg><svg style="left:1578px;top:7px" width="15" height="15" viewBox="0 0 15 15"><defs><linearGradient id="lg" x1="0" y1="0" x2="0.3" y2="1"><stop offset="0" stop-color="#f5ef3a"/><stop offset="0.5" stop-color="#7fdc8a"/><stop offset="1" stop-color="#18c6ea"/></linearGradient><linearGradient id="lg2" x1="0" y1="0" x2="0" y2="1"><stop offset="0" stop-color="#25b8c8"/><stop offset="1" stop-color="#1f62d4"/></linearGradient></defs><path d="M1.5 0.5Q9 1.5 14 6Q10 13 2.5 14.5Q-0.5 7 1.5 0.5Z" fill="url(#lg2)"/><path d="M1.5 0.5Q5 2 7.5 6Q6.5 10 2.5 14.5Q-0.5 7 1.5 0.5Z" fill="url(#lg)"/></svg></div>
<div id="tools" class="abs"><svg style="left:33px;top:5px" width="10" height="12" viewBox="0 0 10 12"><path d="M2 1V11M2 8Q2 5 8 4" fill="none" stroke="#a3a5b1" stroke-width="1.4"/><circle cx="8" cy="3" r="1.6" fill="#a3a5b1"/></svg><div class="tt" style="left:48px">Git</div><svg style="left:84px;top:6px" width="11" height="10" viewBox="0 0 11 10"><path d="M0 1H2M4 1H11M0 5H2M4 5H11M0 9H2M4 9H11" stroke="#a3a5b1" stroke-width="1.3"/></svg><div class="tt" style="left:99px">TODO</div><svg style="left:153px;top:5px" width="12" height="12" viewBox="0 0 12 12"><g fill="none" stroke="#a3a5b1" stroke-width="1.1"><ellipse cx="5.5" cy="2" rx="4.5" ry="1.6"/><path d="M1 2V9Q5.5 11.5 8 10M1 5.5Q5.5 8 10 5.5V2M6 9.5L7.5 11L11 7.5"/></g></svg><div class="tt" style="left:170px"><span style="font-size:11px">数据库更改</span></div><svg style="left:247px;top:5px" width="11" height="11" viewBox="0 0 11 11"><circle cx="5.5" cy="5.5" r="5.5" fill="#a3a5b1"/><path d="M5.5 2.2V6.3M5.5 7.6V8.9" stroke="#3f4150" stroke-width="1.5"/></svg><div class="tt" style="left:263px"><span style="font-size:11px">问题</span></div><svg style="left:304px;top:5px" width="11" height="10" viewBox="0 0 11 10"><rect width="11" height="10" fill="#a3a5b1"/><path d="M1.5 2L4 4L1.5 6M5 8H9" fill="none" stroke="#3f4150" stroke-width="1"/></svg><div class="tt" style="left:320px"><span style="font-size:11px">终端</span></div><svg style="left:361px;top:4px" width="14" height="13" viewBox="0 0 14 13"><path d="M0 13L3 1L6.5 8Z" fill="#b42bc9"/><path d="M2 13L8 3L14 12Z" fill="#3a55d8"/></svg><div class="tt" style="left:378px">MurphySec</div><svg style="left:458px;top:5px" width="12" height="12" viewBox="0 0 12 12"><circle cx="6" cy="6" r="5.8" fill="#a3a5b1"/><path d="M4.5 3.3L8.6 6L4.5 8.7Z" fill="#3f4150"/></svg><div class="tt" style="left:475px"><span style="font-size:11px">服务</span></div><svg style="left:517px;top:5px" width="12" height="11" viewBox="0 0 12 11"><path d="M6 0.5L11.5 10.5H0.5Z" fill="none" stroke="#a3a5b1" stroke-width="1.3"/><path d="M6 4V7.5M6 8.5V9.5" stroke="#a3a5b1" stroke-width="1.2"/></svg><div class="tt" style="left:533px"><span style="font-size:11px">自动构建</span></div><svg style="left:598px;top:5px" width="13" height="12" viewBox="0 0 13 12"><circle cx="5.5" cy="5.5" r="4.8" fill="none" stroke="#a3a5b1" stroke-width="1.2"/><path d="M5.5 3V5.5H7.5" fill="none" stroke="#a3a5b1" stroke-width="1.1"/><path d="M7 6L13 9L7 12Z" fill="#a3a5b1" stroke="#3f4150" stroke-width="0.8"/></svg><div class="tt" style="left:615px">Profiler</div><svg style="left:1481px;top:4px" width="16" height="14" viewBox="0 0 16 14"><ellipse cx="8" cy="8.5" rx="6.5" ry="5.5" fill="#1e1e22"/><path d="M3 3Q8 0 13 4L10 6Z" fill="#d22"/><circle cx="10" cy="7" r="1.2" fill="#fff"/></svg><div class="tt" style="left:1501px">MyBatis Log</div></div>
<div id="status" class="abs"><div class="abs" style="left:6px;top:5px;width:12px;height:11px;border:1px solid #8e909c;border-top-color:transparent;border-right-color:transparent"></div><div class="abs" style="left:8px;top:3px;width:11px;height:10px;border:1px solid #8e909c"></div><div class="tt" style="left:31px;top:3px">Auto fetch: finish... (5 <span style="font-size:11px">分钟</span> <span style="font-size:11px">之前</span>)</div><div class="tt" style="left:1075px;top:3px">Vue TypeScript 4.6.4</div><svg style="left:1195px;top:4px" width="11" height="12" viewBox="0 0 11 12"><path d="M5.5 0.7L10.3 3.4V8.6L5.5 11.3L0.7 8.6V3.4Z" fill="none" stroke="#8a5cf5" stroke-width="1.4"/><path d="M5.5 3.5L8 5V7.5L5.5 9L3 7.5V5Z" fill="none" stroke="#8a5cf5" stroke-width="1"/></svg><div class="tt" style="left:1210px;top:2px;font-size:13px;color:#d9dae2;letter-spacing:0.9px">tabnine</div><svg style="left:1276px;top:4px" width="10" height="12" viewBox="0 0 10 12"><path d="M2 0V12M2 8Q2 4 8 3" fill="none" stroke="#a3a5b1" stroke-width="1.3"/><circle cx="8" cy="2.5" r="1.5" fill="#a3a5b1"/></svg><div class="tt" style="left:1291px;top:3px">DEV1.0.0</div><svg style="left:1347px;top:4px" width="16" height="13" viewBox="0 0 16 13"><path d="M3 10Q0 10 0 7Q0 4 3 4Q4 0 8 0Q12 0 12.5 4Q15 4.5 15 7Q15 10 12 10Z" fill="#8e909c"/><circle cx="12" cy="10" r="2.6" fill="#3f4150"/><circle cx="12" cy="10" r="1.6" fill="none" stroke="#8e909c" stroke-width="1"/></svg><svg style="left:1370px;top:3px" width="13" height="13" viewBox="0 0 13 13"><rect width="13" height="13" rx="2" fill="#27b089"/><path d="M3 4L5.5 6.2L3 8.4M6.5 9.5H10" fill="none" stroke="#fff" stroke-width="1.2"/></svg><svg style="left:1393px;top:4px" width="12" height="12" viewBox="0 0 12 12"><circle cx="6" cy="6" r="6" fill="#55586a"/><path d="M6 2.5V6.5M6 8V9.5" stroke="#3f4150" stroke-width="1.5"/></svg><svg style="left:1417px;top:3px" width="14" height="14" viewBox="0 0 14 14"><circle cx="7" cy="7" r="7" fill="#2f76d6"/><path d="M7 3.5L10.2 9.8H3.8Z" fill="none" stroke="#fff" stroke-width="1.1"/></svg><div class="tt" style="left:1434px;top:3px">3 Δ/up-to-date</div><div class="abs" style="left:1518px;top:0px;width:76px;height:20px;background:#5e5f64"></div><div class="abs" style="left:1518px;top:0px;width:59px;height:20px;background:#6a6b70"></div><div class="tt" style="left:1525px;top:3px;color:#cfd0d6">1143/1536M</div></div>
<div class="abs" style="left:0;top:28px;width:1600px;height:1px;background:#2b2d38"></div></body></html>
